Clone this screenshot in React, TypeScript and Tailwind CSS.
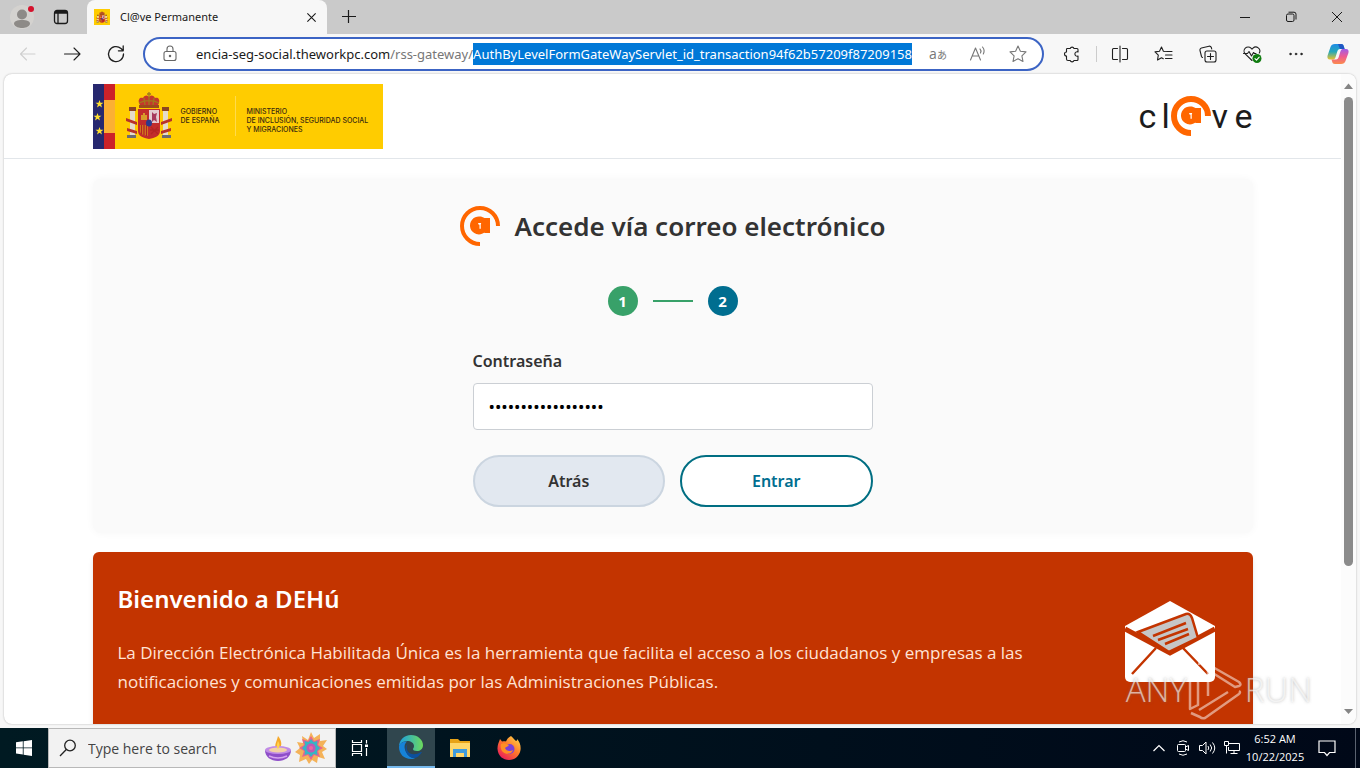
import React from 'react';

interface KeyAtProps {
  stroke: number;
}

const KeyAt: React.FC<KeyAtProps> = ({ stroke }) => {
  const r = 20 - stroke / 2;
  return (
    <svg className="h-10 w-10 shrink-0" viewBox="0 0 40 40" aria-hidden="true">
      <path d={`M${20 + r} 20A${r} ${r} 0 1 0 20 ${20 + r}`} fill="none" stroke="#ff6600" strokeWidth={stroke} />
      <path d="M19.5 10.5c2 0 3.6.6 5 1.6V12H30v15h-5.500v-.4a9 9 0 1 1-5-16.100z" fill="#ff6600" />
      <path d="M18.200 17h3l-.5 1.700.1 4h-1.300v-4l-1.300-.5z" fill="#fff" />
    </svg>
  );
};

const CoatOfArms: React.FC<{ className: string }> = ({ className }) => (
  <svg className={className} viewBox="0 0 46 48" aria-hidden="true">
    <path d="M13 11c-1-4 1-6 4-5 2-3 4-3 6-1 2-2 4-2 6 1 3-1 5 1 4 5l-2 4H15z" fill="#c4382c" />
    <path d="M23 0v6M21 2h4M13 11c6-3 14-3 20 0M18 6l1 7M28 6l-1 7M23 5v8" stroke="#a07a1c" strokeWidth="1.300" fill="none" />
    <path d="M13 13h20v3H13z" fill="#9c4a1c" />
    <path d="M4 18h5v26H4zM37 18h5v26h-5z" fill="#e5dccb" />
    <path d="M3 15h7v4H3zM36 15h7v4h-7z" fill="#8c4522" />
    <path d="M1 43h9v3H1zM36 43h9v3h-9z" fill="#6b6a74" />
    <path d="M0 26l11 4v3L0 29zM46 26l-11 4v3l11-4zM1 36l10 3v3L1 39zM45 36l-10 3v3l10-3z" fill="#b8322a" />
    <path d="M12 17h22v22c0 5-5 7-11 8-6-1-11-3-11-8z" fill="#c22c2c" />
    <path d="M23 18h10v13H23z" fill="#e3ccd0" />
    <path d="M26 20l2 2 3-1-1 4 1 5-3-2-2 2v-5z" fill="#a63a5c" />
    <path d="M15 23h2v-2h2v2h2v5h-6z" fill="#d79a2a" />
    <path d="M14 33h8v11c-5-1-8-2-8-5z" fill="#d8891f" />
    <path d="M15.500 33v9M18 33v10M20.500 33v11M25 35l7 7M32 35l-7 7M24 38h9" stroke="#b42424" strokeWidth="1.400" />
    <ellipse cx="23" cy="31" rx="3" ry="3.500" fill="#2c3a8c" />
  </svg>
);

const GovernmentLogo = () => (
  <div className="flex h-[65px] w-[290px] bg-[#ffcc00] text-[#3a2a10] font-['Inter',sans-serif] text-[7px] leading-[9px]">
    <svg className="h-full w-[22px]" viewBox="0 0 22 65" aria-hidden="true">
      <path d="M0 0h11v65H0z" fill="#27286f" />
      <path d="M11 0h11v65H11z" fill="#cc2229" />
      <path d="M11 16h11v33H11z" fill="#fbb034" />
      <g fill="#ffe02e">
        <path id="star" d="M6.500 16l1 2.800h3L8.100 20.500l.9 2.900-2.500-1.700L4 23.400l.9-2.900-2.400-1.700h3z" />
        <use href="#star" x="-2" y="13" />
        <use href="#star" y="27" />
      </g>
    </svg>
    <CoatOfArms className="mt-2 ml-[11px] h-12 w-[46px]" />
    <div className="mt-[23px] ml-[9px] w-[54px] font-medium">
      GOBIERNO
      <br />
      DE ESPAÑA
    </div>
    <div className="mt-3 h-10 border-l border-[#ffdb4d]" />
    <div className="mt-[23px] ml-[11px] font-medium whitespace-nowrap">
      MINISTERIO
      <br />
      DE INCLUSIÓN, SEGURIDAD SOCIAL
      <br />
      Y MIGRACIONES
    </div>
  </div>
);

const ClaveLogo = () => (
  <div className="flex h-10 items-center font-['Roboto',sans-serif] text-[34px] leading-10 text-[#1c1c1c]">
    <span className="w-[23px]">c</span>
    <span className="w-[10px]">l</span>
    <KeyAt stroke={6} />
    <span className="w-[23px]">v</span>
    <span>e</span>
  </div>
);

const TitleBar = () => (
  <div className="flex h-[34px] shrink-0 bg-[#cacaca]">
    <button type="button" aria-label="Profile" className="flex w-11 items-center justify-center">
      <svg className="h-7 w-7" viewBox="0 0 28 28">
        <circle cx="14" cy="14" r="12" fill="#d4d2cf" />
        <circle cx="14" cy="11.500" r="5" fill="#8d8a87" />
        <path d="M6 21c0-3 3-4 8-4s8 1 8 4c-1 3-5 4-8 4s-7-1-8-4z" fill="#8d8a87" />
        <circle cx="23" cy="6" r="3" fill="#d5122d" />
      </svg>
    </button>
    <button type="button" aria-label="Tab actions" className="mr-[10px] flex w-[33px] items-center justify-center">
      <svg className="h-4 w-4" viewBox="0 0 16 16" fill="none" stroke="#1a1a1a" strokeWidth="1.300">
        <rect x="1.500" y="1.500" width="13" height="13" rx="2.500" />
        <path d="M1.500 4h13M5 4v10.500" />
        <path d="M2 3h12" strokeWidth="2" />
      </svg>
    </button>
    <div className="flex w-60 items-center rounded-t-lg bg-[#f7f7f7] pl-[7px]">
      <div className="flex h-4 w-4 items-center justify-center bg-[#ffcc00]">
        <CoatOfArms className="h-3 w-3" />
      </div>
      <span className="ml-[10px] flex-1 font-['Noto_Sans',sans-serif] text-[11px] leading-4">Cl@ve Permanente</span>
      <button type="button" aria-label="Close tab" className="mr-[10px]">
        <svg className="h-[11px] w-[11px]" viewBox="0 0 12 12" stroke="#1a1a1a" strokeWidth="1.200">
          <path d="M1.500 1.500l9 9M10.500 1.500l-9 9" />
        </svg>
      </button>
    </div>
    <button type="button" aria-label="New tab" className="ml-[14px]">
      <svg className="h-4 w-4" viewBox="0 0 16 16" stroke="#1a1a1a" strokeWidth="1.200">
        <path d="M1 7.500h14M7.500 1v13" />
      </svg>
    </button>
    <div className="flex-1" />
    <button type="button" aria-label="Minimize" className="flex w-[46px] items-center justify-center">
      <svg className="h-3 w-3" viewBox="0 0 12 12" stroke="#1a1a1a">
        <path d="M1 6.500h10" />
      </svg>
    </button>
    <button type="button" aria-label="Restore" className="flex w-[46px] items-center justify-center">
      <svg className="h-3 w-3" viewBox="0 0 12 12" fill="none" stroke="#1a1a1a">
        <rect x="1.500" y="3" width="7.500" height="7.500" rx="1.500" />
        <path d="M3.500 1.200H9a2 2 0 0 1 2 2v5.300" />
      </svg>
    </button>
    <button type="button" aria-label="Close" className="flex w-[46px] items-center justify-center">
      <svg className="h-3 w-3" viewBox="0 0 12 12" stroke="#1a1a1a">
        <path d="M1 1l10 10M11 1L1 11" />
      </svg>
    </button>
  </div>
);

interface ToolButtonProps {
  label: string;
  className: string;
  color?: string;
  children: React.ReactNode;
}

const ToolButton: React.FC<ToolButtonProps> = ({ label, className, color = '#1f1f1f', children }) => (
  <button type="button" aria-label={label} className={`flex shrink-0 items-center justify-center ${className}`}>
    <svg
      className="h-5 w-5"
      viewBox="0 0 20 20"
      fill="none"
      stroke={color}
      strokeWidth="1.100"
      strokeLinecap="round"
      strokeLinejoin="round"
    >
      {children}
    </svg>
  </button>
);

const Toolbar = () => (
  <div className="flex h-10 shrink-0 items-center bg-[#f7f7f7] pl-[6px]">
    <ToolButton label="Back" className="w-11" color="#cfcfcf">
      <path d="M17 10H2.500M8.500 4l-6 6 6 6" />
    </ToolButton>
    <ToolButton label="Forward" className="w-11">
      <path d="M2.500 10H18M12 4l6 6-6 6" />
    </ToolButton>
    <ToolButton label="Refresh" className="w-11">
      <path d="M17.500 10A7.500 7.500 0 1 1 15 4.500L17 6.500M17.200 2v4.800h-4.800" strokeWidth="1.300" />
    </ToolButton>
    <div className="ml-[5px] flex h-[34px] min-w-0 flex-1 items-center rounded-full border-2 border-[#3c64c4] bg-white">
      <ToolButton label="Site information" className="ml-[13px] w-6" color="#666">
        <rect x="4" y="7.500" width="12" height="9" rx="2" />
        <path d="M7 7.500V5a3 3 0 0 1 6 0v2.500" />
        <circle cx="10" cy="12" r=".7" fill="#666" />
      </ToolButton>
      <div
        role="textbox"
        aria-label="Address"
        className="ml-[10px] flex min-w-0 flex-1 justify-end overflow-hidden font-['Noto_Sans',sans-serif] text-[13px] leading-[22px] whitespace-nowrap text-[#1a1a1a]"
      >
        <span>encia-seg-social.theworkpc.com</span>
        <span className="text-[#777]">/rss-gateway/</span>
        <span className="bg-[#0078d7] text-white">AuthByLevelFormGateWayServlet_id_transaction94f62b57209f87209158</span>
      </div>
      <button type="button" aria-label="Translate" className="ml-[6px] w-10 font-['Open_Sans','Noto_Sans_CJK_JP',sans-serif] leading-5 text-[#777]">
        <span className="text-[14px]">a</span>
        <span className="text-[10px]">あ</span>
      </button>
      <ToolButton label="Read aloud" className="w-10" color="#777">
        <path d="M2.500 16L7.500 4l5 12M4.300 12h6.500M12 5c1 1 1 3 .5 4M14.500 3c1.800 2 1.800 5 .8 7" />
      </ToolButton>
      <ToolButton label="Add to favorites" className="mr-[4px] w-10" color="#777">
        <path d="M10 2l2.400 5.200 5.600.7-4.100 3.900 1.100 5.700-5-2.800-5 2.800 1.100-5.700L2 7.900l5.600-.7z" />
      </ToolButton>
    </div>
    <ToolButton label="Extensions" className="ml-2 w-10">
      <path d="M5 4.500h3.200a2 2 0 0 1 3.800 0H15a1 1 0 0 1 1 1V8a2.200 2.200 0 1 0 0 4v3.500a1 1 0 0 1-1 1h-3a2 2 0 0 1-3.800 0H6a1.500 1.500 0 0 1-1.500-1.500v-3a2 2 0 0 1 0-4V5.500a1 1 0 0 1 .5-1z" />
    </ToolButton>
    <div className="ml-1 h-4 border-l border-[#ccc]" />
    <ToolButton label="Split screen" className="ml-[3px] w-10">
      <path d="M7.500 4.500h-4a1 1 0 0 0-1 1v9a1 1 0 0 0 1 1h4M12.500 4.500h4a1 1 0 0 1 1 1v9a1 1 0 0 1-1 1h-4M10 2v16" />
    </ToolButton>
    <ToolButton label="Favorites" className="ml-1 w-10">
      <path d="M11.500 7.500L9.400 7.200 7.500 3 5.500 7.300l-4.500.6 3.300 3.200-.8 4.900 4-2.300 1.800 1M12.500 7.500H18M11.500 11H18M11.500 14.500H18" />
    </ToolButton>
    <ToolButton label="Collections" className="ml-1 w-10">
      <rect x="7" y="7" width="11" height="11" rx="2" />
      <path d="M12.500 9.500v6M9.500 12.500h6M4.500 13.500a2 2 0 0 1-1-1L2 6.500A2 2 0 0 1 3.500 4L11 2.200a2 2 0 0 1 2.400 1.500L13.700 5" />
    </ToolButton>
    <ToolButton label="Browser essentials" className="ml-1 w-10">
      <path d="M10 16.500L3.200 9.800A4 4 0 0 1 9 4.200l1 1 1-1a4 4 0 0 1 6.300 4.800M1.500 9.500h4l1.500-2 2.500 4.500 2-3.500 1 1H14" />
      <circle cx="15" cy="14.500" r="4.500" fill="#107c10" stroke="none" />
      <path d="M13 14.600l1.500 1.500 2.700-2.900" stroke="#fff" />
    </ToolButton>
    <ToolButton label="More" className="ml-1 w-10">
      <g fill="#1f1f1f" strokeWidth=".4">
        <circle cx="4.500" cy="10" r="1" />
        <circle cx="10" cy="10" r="1" />
        <circle cx="15.500" cy="10" r="1" />
      </g>
    </ToolButton>
    <button type="button" aria-label="Copilot" className="mr-[11px] ml-[11px] shrink-0">
      <svg className="h-[22px] w-[22px]" viewBox="0 0 22 22">
        <defs>
          <linearGradient id="copilotA" x1="0" y1="0" x2="0" y2="1">
            <stop offset="0" stopColor="#1f8ce6" />
            <stop offset=".5" stopColor="#26a8b8" />
            <stop offset="1" stopColor="#e9c22c" />
          </linearGradient>
          <linearGradient id="copilotB" x1="0" y1="0" x2="0" y2="1">
            <stop offset="0" stopColor="#a05be8" />
            <stop offset=".5" stopColor="#ee5a92" />
            <stop offset="1" stopColor="#fb8b4c" />
          </linearGradient>
        </defs>
        <path d="M8 1h6c2 0 2.500 1 3 3l.6 2H13c-1.600 0-2.200 1-2.700 2.500L8.600 14c-.6 2-1.500 2.500-3 2.500H3C.6 16.500 0 14.500.6 12.500L3.500 4C4.200 2 5.500 1 8 1z" fill="url(#copilotA)" />
        <path d="M14 21H8c-2 0-2.600-1-3-3l-.5-1.500H9c1.600 0 2.200-1 2.700-2.500l1.700-5.500c.6-2 1.500-2.500 3-2.500H19c2.400 0 3 2 2.400 4L18.500 18c-.7 2-2 3-4.500 3z" fill="url(#copilotB)" />
        <path d="M11 1h3c2 0 2.500 1 3 3l.6 2H13z" fill="#2057c4" />
      </svg>
    </button>
  </div>
);

const LoginCard = () => (
  <section className="mt-5 flex flex-col items-center rounded-lg bg-[#fafafa] px-6 pt-[27px] pb-[26px] shadow-[0_0_8px_rgba(0,0,0,0.04)]">
    <div className="mb-10 flex items-center gap-[15px]">
      <KeyAt stroke={4} />
      <h1 className="font-['Noto_Sans',sans-serif] text-[26px] leading-10 font-semibold text-[#333]">
        Accede vía correo electrónico
      </h1>
    </div>
    <div className="mb-[30px] flex items-center gap-[15px] text-[15px] font-bold text-white">
      <span className="flex h-[30px] w-[30px] items-center justify-center rounded-full bg-[#38a169]">1</span>
      <span className="h-[2px] w-10 bg-[#38a169]" />
      <span className="flex h-[30px] w-[30px] items-center justify-center rounded-full bg-[#006e90]">2</span>
    </div>
    <div className="w-full max-w-[400px] font-['Noto_Sans',sans-serif]">
      <label htmlFor="clave" className="mb-[7px] block text-[16px] leading-[30px] font-semibold text-[#333]">
        Contraseña
      </label>
      <input
        id="clave"
        type="password"
        readOnly
        value="000000000000000000"
        className="mb-[25px] block h-[47px] w-full rounded border border-[#cbcfd4] bg-white px-[15px] text-[17px] text-black outline-none"
      />
      <div className="flex gap-[15px] text-[16px] font-semibold">
        <button type="button" className="h-[52px] flex-1 rounded-full border-2 border-[#cbd5e0] bg-[#e2e8f0] text-[#333]">
          Atrás
        </button>
        <button type="button" className="h-[52px] flex-1 rounded-full border-2 border-[#006e82] bg-white text-[#006e90]">
          Entrar
        </button>
      </div>
    </div>
  </section>
);

const WelcomeBanner = () => (
  <section className="mt-[19px] flex items-start justify-between rounded-md bg-[#c33400] px-[25px] pt-[27px] pb-10 font-['Noto_Sans',sans-serif] shadow-md">
    <div className="max-w-[940px]">
      <h2 className="mb-[19px] text-[24px] leading-10 font-semibold text-white">Bienvenido a DEHú</h2>
      <p className="font-['Open_Sans',sans-serif] text-[17px] leading-[29px] text-[#ffe3d5]">
        La Dirección Electrónica Habilitada Única es la herramienta que facilita el acceso a los ciudadanos y empresas a las
        notificaciones y comunicaciones emitidas por las Administraciones Públicas.
      </p>
    </div>
    <svg className="mt-[22px] mr-[13px] h-[82px] w-[90px] shrink-0" viewBox="0 0 90 82" aria-hidden="true">
      <path d="M45 0l45 25v51a5 5 0 0 1-5 5H5a5 5 0 0 1-5-5V25z" fill="#fff" />
      <path d="M0 28l45 24 45-24" fill="none" stroke="#c33400" strokeWidth="5" />
      <path d="M13 31l48-18q4-1 6 4l6 20-29 14z" fill="#c6c6c6" stroke="#c33400" strokeWidth="2.500" />
      <path d="M28 35l33-13M33 39l30-11M40 43l24-10" stroke="#c33400" strokeWidth="2.500" />
      <path d="M31 47L7 73M58 47l25 26" stroke="#c33400" strokeWidth="2.500" />
    </svg>
  </section>
);

const Watermark = () => (
  <div className="pointer-events-none absolute right-12 bottom-[47px] flex items-center text-[33px] leading-[44px] font-light text-white/60 [text-shadow:0_0_3px_rgba(120,120,120,0.5)]">
    <span>ANY</span>
    <svg className="h-[62px] w-[58px]" viewBox="0 0 58 62" fill="none" stroke="#fff" strokeOpacity=".5" strokeWidth="2.500" strokeLinejoin="round">
      <path d="M10 11H6q-3 0-3 3v36l8-4V17" />
      <path d="M12 6q0-5 5-3l35 20q3 3 0 4l-4 1L21 11v26" />
      <path d="M52 35L18 59q-3 1-5-1l-9-4M52 35q2-2 0-3M41 33L12 51" />
    </svg>
    <span>RUN</span>
  </div>
);

const Taskbar = () => (
  <footer className="flex h-10 shrink-0 bg-linear-to-r from-[#001a22] to-[#000818] text-white">
    <button type="button" aria-label="Start" className="flex w-12 items-center justify-center">
      <svg className="h-4 w-4" viewBox="0 0 16 16" fill="#fff">
        <path d="M0 2.300l6.800-1v6.200H0zM7.600 1.200L16 0v7.500H7.600zM0 8.300h6.800v6.300l-6.800-1zM7.600 8.300H16V16l-8.400-1.300z" />
      </svg>
    </button>
    <div className="flex w-72 items-center border border-[#b8b8b8] bg-[#f2f2f2] pl-[10px]">
      <svg className="h-[18px] w-[18px]" viewBox="0 0 18 18" fill="none" stroke="#222" strokeWidth="1.300">
        <circle cx="11" cy="6.500" r="5.300" />
        <path d="M7.300 10.500L1 17" />
      </svg>
      <input
        type="text"
        aria-label="Search"
        placeholder="Type here to search"
        className="ml-[11px] w-[166px] bg-transparent text-[14px] text-[#333] outline-none placeholder:text-[#444]"
      />
      <svg className="ml-[10px] h-7 w-[28px]" viewBox="0 0 28 28" aria-hidden="true">
        <path d="M14 2c4 5 4 9 2 12h-4c-2-3 1-7 2-12z" fill="#f6a828" />
        <path d="M1 16c0 7 6 11 13 11s13-4 13-11z" fill="#8f4fc9" />
        <ellipse cx="14" cy="16" rx="13" ry="4" fill="#c08be6" />
        <ellipse cx="14" cy="16" rx="9" ry="2.500" fill="#f3d2a5" />
        <path d="M5 22q9 4 18 0" stroke="#d6a4f0" strokeWidth="1.500" fill="none" />
        <path d="M14 7c2 3 2 6 0 8-2-2-1-5 0-8z" fill="#ffd24d" />
      </svg>
      <svg className="ml-[3px] h-8 w-8" viewBox="0 0 32 32" aria-hidden="true">
        <path d="M16 0l3 6 6-4v7l7-1-4 6 4 3-5 3 3 7-7-2-1 6-5-3-3 4-3-5-7 3 1-7-5-3 5-4-3-6 6 1-1-7 6 4z" fill="#f4b259" />
        <path d="M16 4l3 5 6-2-2 6 5 3-5 3 2 6-6-2-3 5-3-5-6 2 2-6-5-3 5-3-2-6 6 2z" fill="#e8638f" />
        <path d="M16 7l2.500 3 4-1-.5 4 3 3-3 3 .5 4-4-1-2.500 3-2.500-3-4 1 .5-4-3-3 3-3-.5-4 4 1z" fill="#36b5c4" />
        <circle cx="16" cy="16" r="4.500" fill="#c058b4" />
        <circle cx="16" cy="16" r="2" fill="#f0679c" />
      </svg>
    </div>
    <button type="button" aria-label="Task View" className="mr-[3px] flex w-12 items-center justify-center">
      <svg className="h-4 w-[18px]" viewBox="0 0 18 16" fill="none" stroke="#fff" strokeWidth="1.200">
        <path d="M1.500 0v2.500h9V0M1.500 16v-2.500h9V16M1.500 4.500h9v7h-9zM15.500 0v3.500M15.500 8v8" />
        <path d="M14 4.500h3v2.500h-3z" fill="#fff" stroke="none" />
      </svg>
    </button>
    <button type="button" aria-label="Microsoft Edge" className="flex w-12 items-center justify-center border-b-2 border-[#76b9ed] bg-[#30464e]">
      <svg className="h-6 w-6" viewBox="0 0 24 24">
        <defs>
          <linearGradient id="edge" x1="0" y1="0" x2="1" y2="0">
            <stop offset="0" stopColor="#1b9de2" />
            <stop offset="1" stopColor="#6ddb5c" />
          </linearGradient>
        </defs>
        <path d="M12 0c7 0 12 5 12 10 0 4-3 6-6 6-3 0-4-1-4-2s1-1 1-3c0-3-3-5-7-5-5 0-8 4-8 6C0 5 5 0 12 0z" fill="url(#edge)" />
        <path d="M0 12c0-3 4-6 8-5.500C5 9 5 13 7 17c2 4 5 6 9 6-1 .7-2 1-4 1C5 24 0 19 0 12z" fill="#1683d8" />
        <path d="M9 9c-3 3-1 9 4 10 4 1 7-1 9-2 .7-.3 1 .2.500.8C20 21.500 17 23.500 14 23 9 22 5 16 7 11z" fill="#0c509e" />
      </svg>
    </button>
    <button type="button" aria-label="File Explorer" className="ml-px flex w-12 items-center justify-center">
      <svg className="h-5 w-[22px]" viewBox="0 0 22 20">
        <path d="M1 1h8l2 2h10v5H1z" fill="#e8a317" />
        <path d="M1 5h20v14H1z" fill="#ffd668" />
        <path d="M4 19v-8h14v8h-3v-4H7v4z" fill="#3f9bdc" />
      </svg>
    </button>
    <button type="button" aria-label="Firefox" className="flex w-[50px] items-center justify-center">
      <svg className="h-6 w-6" viewBox="0 0 24 24">
        <defs>
          <linearGradient id="fox" x1="1" y1="0" x2=".2" y2="1">
            <stop offset="0" stopColor="#ffe14d" />
            <stop offset=".5" stopColor="#ff7a2a" />
            <stop offset="1" stopColor="#e8185c" />
          </linearGradient>
        </defs>
        <path d="M14 0c2 2 3 3 5 5 1 0 1-1 1-2 3 3 4 7 3.500 11C22.500 20 18 24 12 24S1 20 .5 13C.3 9 2 6 3 3l2 2.500C7 5 8 5 9 5.500 10 3 12 1 14 0z" fill="url(#fox)" />
        <circle cx="12.500" cy="13" r="5" fill="#7a3fd8" />
        <path d="M4 8c3-2 6 0 8 1-1 2-3 1.500-4 3 1 3 5 4 8 2-1 4-7 5-10 2-2-2-3-5-2-8z" fill="#ff8f24" />
      </svg>
    </button>
    <div className="flex-1" />
    <div className="flex items-center gap-2">
      <svg className="h-4 w-4" viewBox="0 0 16 16" fill="none" stroke="#fff" strokeWidth="1.200">
        <path d="M2.500 11L8 5.500l5.500 5.500" />
      </svg>
      <svg className="h-4 w-4" viewBox="0 0 16 16" fill="none" stroke="#fff">
        <path d="M4 2q4-2.500 8 0M4 14q4 2.500 8 0" />
        <rect x="2.500" y="4.500" width="8" height="7" rx="1" />
        <path d="M10.500 7l3-1.500v5l-3-1.500" />
      </svg>
      <svg className="h-4 w-[17px]" viewBox="0 0 17 16" fill="none" stroke="#fff">
        <path d="M.500 5.500h3L7 2v12l-3.500-3.500h-3zM9 6q1.500 2 0 4M11.200 4.500q3 3.500 0 7M13.500 2.500q4.500 5.500 0 11" />
      </svg>
      <svg className="h-4 w-4" viewBox="0 0 16 16" fill="none" stroke="#fff">
        <path d="M5 3.500h10.500v7H4.500V7M.500 1.500h4v4h-4zM2.500 5.500v8M10 10.500v3M6.500 13.500h7" />
      </svg>
    </div>
    <div className="ml-[5px] flex w-[60px] flex-col justify-center text-center text-[11px] leading-[18px] whitespace-nowrap">
      <span>6:52 AM</span>
      <span>10/22/2025</span>
    </div>
    <button type="button" aria-label="Notifications" className="ml-[5px] flex w-[34px] items-center justify-center">
      <svg className="h-[18px] w-[18px]" viewBox="0 0 18 18" fill="none" stroke="#fff" strokeWidth="1.200">
        <path d="M1 2h16v11.500h-5.500L9 16.500 6.500 13.500H1z" />
      </svg>
    </button>
    <div className="mr-1 ml-[11px] border-l border-[#5a6270]" />
  </footer>
);

export default function App() {
  return (
    <div className="relative flex h-screen flex-col overflow-hidden bg-[#f7f7f7] font-['Open_Sans',sans-serif] text-[#1a1a1a]">
      <TitleBar />
      <Toolbar />
      <div className="mx-1 mb-1 flex min-h-0 flex-1 overflow-hidden rounded-lg bg-white shadow-[0_0_2px_rgba(0,0,0,0.3)]">
        <main className="min-w-0 flex-1 overflow-hidden">
          <header className="border-b border-[#e2e6ea]">
            <div className="mx-auto flex max-w-[1160px] items-start justify-between pt-[10px] pb-[9px]">
              <GovernmentLogo />
              <div className="mt-3">
                <ClaveLogo />
              </div>
            </div>
          </header>
          <div className="mx-auto max-w-[1160px]">
            <LoginCard />
            <WelcomeBanner />
          </div>
        </main>
        <div className="flex w-[15px] shrink-0 flex-col items-center bg-[#fcfcfc] py-2" aria-hidden="true">
          <svg className="h-[10px] w-[9px]" viewBox="0 0 9 10">
            <path d="M4.500 1.500L9 7H0z" fill="#858585" />
          </svg>
          <div className="mt-[5px] flex w-[9px] flex-1 flex-col">
            <div className="h-[77%] rounded-full bg-[#8b8b8b]" />
          </div>
          <svg className="h-[10px] w-[9px]" viewBox="0 0 9 10">
            <path d="M0 3h9L4.500 8z" fill="#858585" />
          </svg>
        </div>
      </div>
      <Taskbar />
      <Watermark />
    </div>
  );
}
